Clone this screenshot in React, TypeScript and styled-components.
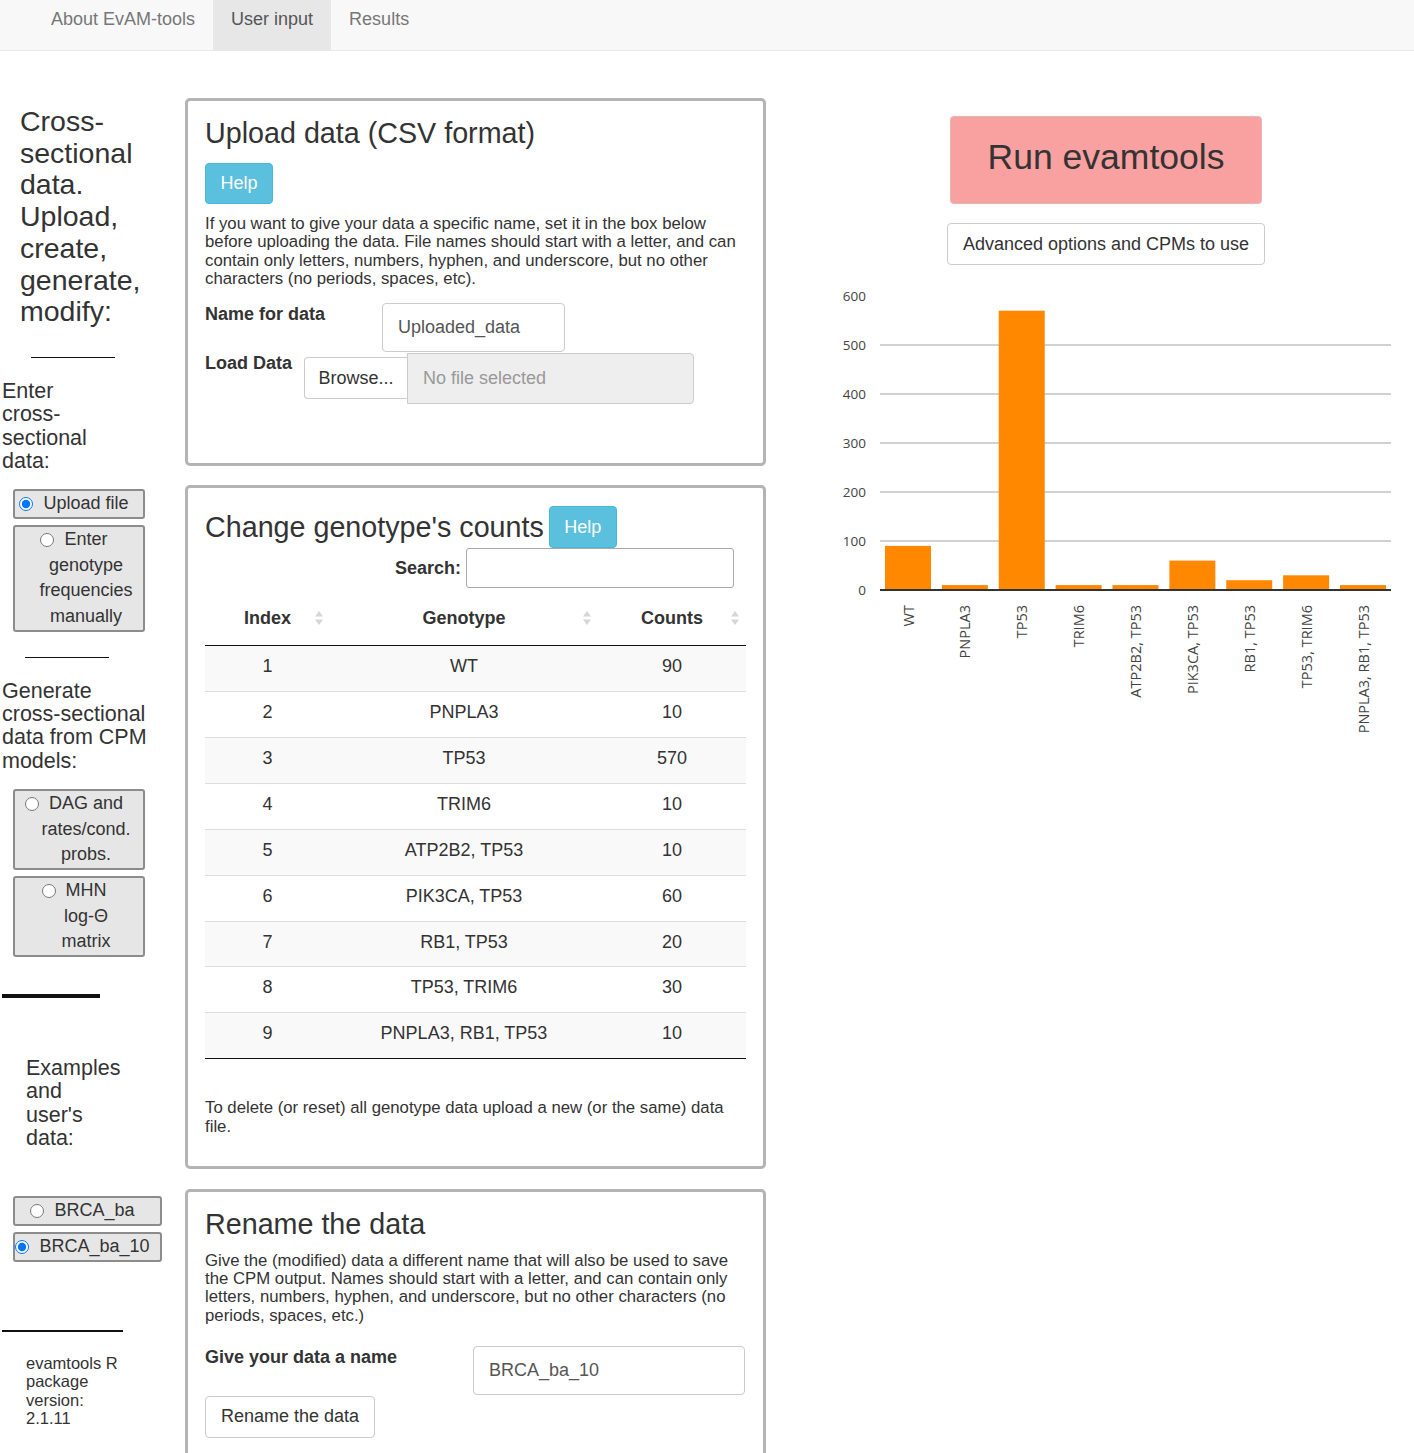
import React from "react";
import styled, { createGlobalStyle } from "styled-components";

const GlobalStyle = createGlobalStyle`
  html, body { margin: 0; padding: 0; background: #fff; }
  body {
    font-family: "Liberation Sans", Arial, Helvetica, sans-serif;
    color: #333;
  }
  * { box-sizing: border-box; }
`;

const Page = styled.div`
  width: 1414px;
  min-height: 1453px;
  overflow: hidden;
`;

/* ---------- Nav ---------- */
const NavBar = styled.nav`
  height: 51px;
  background: #f8f8f8;
  border-bottom: 1px solid #e7e7e7;
  display: flex;
  padding-left: 33px;
`;

const NavLink = styled.a<{ $active?: boolean }>`
  display: block;
  height: 50px;
  padding: 9px 18px 0;
  font-size: 18px;
  line-height: 20px;
  text-decoration: none;
  color: ${(p) => (p.$active ? "#555" : "#777")};
  background: ${(p) => (p.$active ? "#e7e7e7" : "transparent")};
`;

/* ---------- Layout ---------- */
const Main = styled.div`
  display: flex;
  align-items: flex-start;
`;

const Sidebar = styled.aside`
  width: 170px;
  flex: none;
  display: flex;
  flex-direction: column;
  align-items: flex-start;
`;

const Middle = styled.div`
  width: 581px;
  flex: none;
  margin-left: 15px;
  padding-top: 47px;
`;

const RightCol = styled.div`
  flex: 1;
  display: flex;
  flex-direction: column;
  align-items: center;
  padding-left: 32px;
  padding-top: 65px;
`;

/* ---------- Sidebar parts ---------- */
const SideHeading = styled.h2`
  margin: 55px 0 0 20px;
  width: 150px;
  font-size: 28.5px;
  font-weight: 400;
  line-height: 31.7px;
  color: #333;
`;

const SideText = styled.div<{ $ml: number; $w: number; $mt: number }>`
  margin: ${(p) => p.$mt}px 0 0 ${(p) => p.$ml}px;
  width: ${(p) => p.$w}px;
  font-size: 21.5px;
  line-height: 23.3px;
  color: #333;
`;

const VersionText = styled.div`
  margin: 22px 0 0 26px;
  width: 100px;
  font-size: 16.5px;
  line-height: 18.5px;
  color: #333;
`;

const Rule = styled.div<{ $ml: number; $w: number; $h: number; $mt: number }>`
  margin: ${(p) => p.$mt}px 0 0 ${(p) => p.$ml}px;
  width: ${(p) => p.$w}px;
  height: ${(p) => p.$h}px;
  background: #111;
`;

const RadioBox = styled.label<{ $w: number; $mt: number }>`
  display: block;
  margin: ${(p) => p.$mt}px 0 0 13px;
  width: ${(p) => p.$w}px;
  background: #e6e6e6;
  border: 2px solid #8c8c8c;
  border-radius: 3px;
  padding-left: 14px;
  text-align: center;
  font-size: 18px;
  line-height: 25.7px;
  color: #333;
`;

const Radio = styled.input.attrs({ type: "radio" })`
  width: 14px;
  height: 14px;
  margin: 0 10px 0 -24px;
  vertical-align: -2px;
`;

/* ---------- Panels ---------- */
const Panel = styled.section<{ $mt: number; $pb: number }>`
  margin-top: ${(p) => p.$mt}px;
  border: 3px solid #b4b4b4;
  border-radius: 5px;
  padding: 17px 17px ${(p) => p.$pb}px;
`;

const PanelTitle = styled.h3`
  margin: 0;
  font-size: 28.7px;
  font-weight: 400;
  line-height: 31px;
  color: #333;
`;

const TitleRow = styled.div`
  display: flex;
  align-items: center;
  gap: 5px;
  margin-top: 1px;
`;

const HelpButton = styled.button<{ $mt?: number; $h?: number }>`
  display: block;
  margin-top: ${(p) => p.$mt ?? 0}px;
  width: 68px;
  height: ${(p) => p.$h ?? 41}px;
  background: #5bc0de;
  border: 1px solid #46b8da;
  border-radius: 4px;
  color: #fff;
  font-family: inherit;
  font-size: 18px;
  padding: 0;
`;

const Para = styled.p<{ $mt: number }>`
  margin: ${(p) => p.$mt}px 0 0;
  font-size: 16.75px;
  line-height: 18.3px;
  color: #333;
`;

const FieldRow = styled.div<{ $mt: number }>`
  display: flex;
  align-items: flex-start;
  margin-top: ${(p) => p.$mt}px;
`;

const FieldLabel = styled.label<{ $w?: number; $mt?: number }>`
  flex: none;
  ${(p) => (p.$w ? `width: ${p.$w}px;` : "")}
  margin-top: ${(p) => p.$mt ?? 0}px;
  font-weight: 700;
  font-size: 18px;
  line-height: 20px;
  color: #333;
`;

const TextInput = styled.input<{ $w: number }>`
  width: ${(p) => p.$w}px;
  height: 49px;
  border: 1px solid #ccc;
  border-radius: 4px;
  padding: 0 15px;
  font-family: inherit;
  font-size: 18px;
  color: #555;
  background: #fff;
  outline: none;
`;

const BrowseButton = styled.button`
  margin: 4px 0 0 12px;
  width: 103px;
  height: 42px;
  background: #fff;
  border: 1px solid #ccc;
  border-right: none;
  border-radius: 4px 0 0 4px;
  font-family: inherit;
  font-size: 18px;
  color: #333;
  padding: 0;
`;

const FileField = styled.div`
  width: 287px;
  height: 51px;
  background: #eee;
  border: 1px solid #ccc;
  border-radius: 0 4px 4px 0;
  display: flex;
  align-items: center;
  padding-left: 15px;
  font-size: 18px;
  color: #999;
`;

const PlainButton = styled.button<{ $mt?: number }>`
  display: block;
  margin-top: ${(p) => p.$mt ?? 0}px;
  height: 42px;
  padding: 0 15px;
  background: #fff;
  border: 1px solid #ccc;
  border-radius: 4px;
  font-family: inherit;
  font-size: 18px;
  color: #333;
`;

const SearchRow = styled.div`
  display: flex;
  justify-content: flex-end;
  align-items: center;
  gap: 5px;
  padding-right: 12px;
`;

const SearchInput = styled.input`
  width: 268px;
  height: 40px;
  border: 1px solid #aaa;
  border-radius: 3px;
  background: #fff;
  outline: none;
`;

/* ---------- Table ---------- */
const Table = styled.table`
  width: 100%;
  margin-top: 3px;
  border-collapse: collapse;
  font-size: 18px;
  color: #333;
`;

const Th = styled.th`
  position: relative;
  padding: 14px 10px;
  line-height: 26px;
  font-weight: 700;
  text-align: center;
  border-bottom: 1px solid #111;
`;

const SortIcon = styled.svg`
  position: absolute;
  right: 6px;
  top: 50%;
  transform: translateY(-50%);
`;

const Tr = styled.tr<{ $striped: boolean; $last: boolean }>`
  background: ${(p) => (p.$striped ? "#f9f9f9" : "#fff")};
  td {
    border-bottom: 1px solid ${(p) => (p.$last ? "#111" : "#ddd")};
  }
`;

const Td = styled.td`
  padding: 8px 10px 11.2px;
  line-height: 25.7px;
  text-align: center;
`;

/* ---------- Right column ---------- */
const RunButton = styled.button`
  width: 312px;
  height: 88px;
  background: #f9a0a0;
  border: 1px solid #e5b4b4;
  border-radius: 4px;
  font-family: inherit;
  font-size: 35.5px;
  color: #333;
  padding: 0 0 6px;
`;

const ChartBox = styled.div`
  align-self: stretch;
  margin-top: 15px;
`;

const data: [string, number][] = [
  ["WT", 90],
  ["PNPLA3", 10],
  ["TP53", 570],
  ["TRIM6", 10],
  ["ATP2B2, TP53", 10],
  ["PIK3CA, TP53", 60],
  ["RB1, TP53", 20],
  ["TP53, TRIM6", 30],
  ["PNPLA3, RB1, TP53", 10],
];

function Sort() {
  return (
    <SortIcon width="10" height="18" viewBox="0 0 10 18">
      <polygon points="5,2 9,7.5 1,7.5" fill="#d6d6d6" />
      <polygon points="1,10.5 9,10.5 5,16" fill="#d6d6d6" />
    </SortIcon>
  );
}

function BarChart() {
  const base = 310;
  const k = 0.49;
  const x0 = 87;
  const step = 56.875;
  const bw = 46;
  const ticks = [0, 100, 200, 300, 400, 500, 600];
  return (
    <svg width="616" height="460" viewBox="0 0 616 460">
      {ticks.slice(1, 6).map((t) => (
        <line
          key={t}
          x1={82}
          x2={593}
          y1={base - t * k}
          y2={base - t * k}
          stroke="#c2c2c2"
          strokeWidth={1.5}
        />
      ))}
      {ticks.map((t) => (
        <text
          key={"l" + t}
          x={68}
          y={base - t * k}
          textAnchor="end"
          dominantBaseline="central"
          fontFamily="'Open Sans', Arial, sans-serif"
          fontSize="13.5"
          fill="#444"
        >
          {t}
        </text>
      ))}
      {data.map(([name, v], i) => {
        const x = x0 + i * step;
        const h = v * k;
        return (
          <g key={name}>
            <rect x={x} y={base - h} width={bw} height={h} fill="#ff8800" />
            <text
              transform={`translate(${x + bw / 2}, 325) rotate(-90)`}
              textAnchor="end"
              dominantBaseline="central"
              fontFamily="'Open Sans', Arial, sans-serif"
              fontSize="14.5"
              fill="#444"
            >
              {name}
            </text>
          </g>
        );
      })}
      <line x1={82} x2={593} y1={base} y2={base} stroke="#333" strokeWidth={2} />
    </svg>
  );
}

export default function App() {
  return (
    <Page>
      <GlobalStyle />
      <NavBar>
        <NavLink>About EvAM-tools</NavLink>
        <NavLink $active>User input</NavLink>
        <NavLink>Results</NavLink>
      </NavBar>
      <Main>
        <Sidebar>
          <SideHeading>Cross-sectional data. Upload, create, generate, modify:</SideHeading>
          <Rule $ml={31} $w={84} $h={1} $mt={29} />
          <SideText $ml={2} $w={100} $mt={22}>
            Enter cross-sectional data:
          </SideText>
          <RadioBox $w={132} $mt={16}>
            <Radio defaultChecked name="src" />
            Upload file
          </RadioBox>
          <RadioBox $w={132} $mt={6}>
            <Radio name="src" />
            Enter genotype frequencies manually
          </RadioBox>
          <Rule $ml={25} $w={84} $h={1} $mt={25} />
          <SideText $ml={2} $w={150} $mt={22}>
            Generate cross-sectional data from CPM models:
          </SideText>
          <RadioBox $w={132} $mt={16}>
            <Radio name="src" />
            DAG and rates/cond. probs.
          </RadioBox>
          <RadioBox $w={132} $mt={6}>
            <Radio name="src" />
            MHN
            <br />
            log-Θ
            <br />
            matrix
          </RadioBox>
          <Rule $ml={2} $w={98} $h={4} $mt={37} />
          <SideText $ml={26} $w={96} $mt={59}>
            Examples and user's data:
          </SideText>
          <RadioBox $w={149} $mt={46}>
            <Radio name="ex" />
            BRCA_ba
          </RadioBox>
          <RadioBox $w={149} $mt={6}>
            <Radio name="ex" defaultChecked />
            BRCA_ba_10
          </RadioBox>
          <Rule $ml={2} $w={121} $h={2} $mt={68} />
          <VersionText>evamtools R package version: 2.1.11</VersionText>
        </Sidebar>

        <Middle>
          <Panel $mt={0} $pb={59}>
            <PanelTitle>Upload data (CSV format)</PanelTitle>
            <HelpButton $mt={14}>Help</HelpButton>
            <Para $mt={11}>
              If you want to give your data a specific name, set it in the box below before
              uploading the data. File names should start with a letter, and can contain only
              letters, numbers, hyphen, and underscore, but no other characters (no periods,
              spaces, etc).
            </Para>
            <FieldRow $mt={15}>
              <FieldLabel $w={177} $mt={1}>
                Name for data
              </FieldLabel>
              <TextInput $w={183} defaultValue="Uploaded_data" readOnly />
            </FieldRow>
            <FieldRow $mt={1}>
              <FieldLabel>Load Data</FieldLabel>
              <BrowseButton>Browse...</BrowseButton>
              <FileField>No file selected</FileField>
            </FieldRow>
          </Panel>

          <Panel $mt={19} $pb={30}>
            <TitleRow>
              <PanelTitle>Change genotype's counts</PanelTitle>
              <HelpButton $h={42}>Help</HelpButton>
            </TitleRow>
            <SearchRow>
              <FieldLabel>Search:</FieldLabel>
              <SearchInput readOnly />
            </SearchRow>
            <Table>
              <colgroup>
                <col style={{ width: 125 }} />
                <col style={{ width: 268 }} />
                <col style={{ width: 148 }} />
              </colgroup>
              <thead>
                <tr>
                  <Th>
                    Index
                    <Sort />
                  </Th>
                  <Th>
                    Genotype
                    <Sort />
                  </Th>
                  <Th>
                    Counts
                    <Sort />
                  </Th>
                </tr>
              </thead>
              <tbody>
                {data.map(([g, c], i) => (
                  <Tr key={g} $striped={i % 2 === 0} $last={i === data.length - 1}>
                    <Td>{i + 1}</Td>
                    <Td>{g}</Td>
                    <Td>{c}</Td>
                  </Tr>
                ))}
              </tbody>
            </Table>
            <Para $mt={40}>
              To delete (or reset) all genotype data upload a new (or the same) data file.
            </Para>
          </Panel>

          <Panel $mt={20} $pb={30}>
            <PanelTitle>Rename the data</PanelTitle>
            <Para $mt={12}>
              Give the (modified) data a different name that will also be used to save the CPM
              output. Names should start with a letter, and can contain only letters, numbers,
              hyphen, and underscore, but no other characters (no periods, spaces, etc.)
            </Para>
            <FieldRow $mt={21}>
              <FieldLabel $w={268} $mt={1}>
                Give your data a name
              </FieldLabel>
              <TextInput $w={272} defaultValue="BRCA_ba_10" readOnly />
            </FieldRow>
            <PlainButton $mt={1}>Rename the data</PlainButton>
          </Panel>
        </Middle>

        <RightCol>
          <RunButton>Run evamtools</RunButton>
          <PlainButton $mt={19}>Advanced options and CPMs to use</PlainButton>
          <ChartBox>
            <BarChart />
          </ChartBox>
        </RightCol>
      </Main>
    </Page>
  );
}
